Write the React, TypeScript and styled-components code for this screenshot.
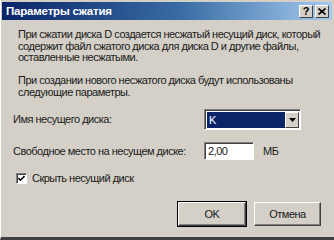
import React from "react";
import styled, { createGlobalStyle } from "styled-components";

const Global = createGlobalStyle`
  html, body { margin: 0; padding: 0; background: #d4d0c8; }
  body { width: 334px; height: 240px; overflow: hidden; }
`;

const Window = styled.div`
  width: 334px;
  height: 240px;
  box-sizing: border-box;
  background: #d4d0c8;
  border-left: 1px solid #ffffff;
  border-bottom: 3px solid #404040;
  padding: 2px 2px 0 1px;
  display: flex;
  flex-direction: column;
  font-family: "Liberation Sans", Arial, sans-serif;
  font-size: 11px;
  letter-spacing: -0.5px;
  color: #1a1a1a;
`;

const TitleBar = styled.div`
  height: 18px;
  display: flex;
  align-items: center;
  padding: 0 3px 0 4px;
  background: linear-gradient(to right, #0a246a 0%, #3a6ea5 55%, #a6caf0 100%);
`;

const Title = styled.span`
  flex: 1;
  color: #fff;
  font-weight: bold;
  font-size: 11.5px;
  letter-spacing: -0.2px;
`;

const TitleBtn = styled.div`
  width: 14px;
  height: 13px;
  margin-left: 2px;
  background: #d4d0c8;
  box-sizing: border-box;
  border-top: 1px solid #fff;
  border-left: 1px solid #fff;
  border-right: 1px solid #404040;
  border-bottom: 1px solid #404040;
  display: flex;
  align-items: center;
  justify-content: center;
  font-weight: bold;
  font-size: 11px;
  letter-spacing: 0;
  color: #000;
  line-height: 1;
`;

const Body = styled.div`
  flex: 1;
  display: flex;
  flex-direction: column;
  padding: 9px 10px 0 11px;
`;

const Para = styled.p<{ $mt?: number }>`
  margin: ${(p) => p.$mt ?? 0}px 0 0 5px;
  line-height: 11.7px;
  white-space: nowrap;
`;

const FormRow = styled.div<{ $mt: number; $h: number }>`
  display: grid;
  grid-template-columns: 191px max-content max-content;
  justify-content: start;
  align-items: center;
  margin-top: ${(p) => p.$mt}px;
  height: ${(p) => p.$h}px;
`;

const Label = styled.span``;

const Select = styled.div`
  width: 97px;
  height: 21px;
  box-sizing: border-box;
  background: #fff;
  border-top: 1px solid #808080;
  border-left: 1px solid #808080;
  border-right: 1px solid #fff;
  border-bottom: 1px solid #fff;
  box-shadow: inset 1px 1px 0 #404040;
  display: flex;
  padding: 2px 1px 1px 2px;
`;

const SelectValue = styled.div`
  flex: 1;
  background: #0a246a;
  color: #fff;
  padding-left: 2px;
  line-height: 16px;
`;

const ArrowBtn = styled.div`
  width: 14px;
  background: #d4d0c8;
  box-sizing: border-box;
  border-top: 1px solid #fff;
  border-left: 1px solid #fff;
  border-right: 1px solid #404040;
  border-bottom: 1px solid #404040;
  display: flex;
  align-items: center;
  justify-content: center;
`;

const Input = styled.div`
  width: 50px;
  height: 18px;
  box-sizing: border-box;
  background: #fff;
  border-top: 1px solid #808080;
  border-left: 1px solid #808080;
  border-right: 1px solid #fff;
  border-bottom: 1px solid #fff;
  box-shadow: inset 1px 1px 0 #404040;
  padding-left: 3px;
  line-height: 16px;
`;

const Unit = styled.span`
  margin-left: 9px;
`;

const CheckRow = styled.label`
  display: flex;
  align-items: center;
  margin-top: 12px;
  margin-left: 3px;
  height: 13px;
`;

const Box = styled.span`
  width: 11px;
  height: 11px;
  box-sizing: border-box;
  background: #fff;
  border-top: 1px solid #808080;
  border-left: 1px solid #808080;
  border-right: 1px solid #fff;
  border-bottom: 1px solid #fff;
  box-shadow: inset 1px 1px 0 #404040;
  display: flex;
  align-items: center;
  justify-content: center;
  margin-right: 5px;
`;

const Buttons = styled.div`
  display: flex;
  justify-content: flex-end;
  gap: 8px;
  margin-top: 17px;
  padding-right: 1px;
`;

const Button = styled.button<{ $default?: boolean; $w: number }>`
  width: ${(p) => p.$w}px;
  height: 24px;
  box-sizing: border-box;
  background: #d4d0c8;
  font-family: "Liberation Sans", Arial, sans-serif;
  font-size: 11px;
  letter-spacing: -0.5px;
  color: #1a1a1a;
  padding: 0;
  border-top: 1px solid #fff;
  border-left: 1px solid #fff;
  border-right: 1px solid #404040;
  border-bottom: 1px solid #404040;
  box-shadow: inset -1px -1px 0 #808080;
  outline: ${(p) => (p.$default ? "1px solid #000" : "none")};
  outline-offset: 0;
`;

export default function App() {
  return (
    <>
      <Global />
      <Window>
        <TitleBar>
          <Title>Параметры сжатия</Title>
          <TitleBtn>?</TitleBtn>
          <TitleBtn>
            <svg width="8" height="7" viewBox="0 0 8 7">
              <path d="M0.5 0.5 L7.5 6.5 M7.5 0.5 L0.5 6.5" stroke="#000" strokeWidth="1.6" />
            </svg>
          </TitleBtn>
        </TitleBar>
        <Body>
          <Para>
            При сжатии диска D создается несжатый несущий диск, который
            <br />
            содержит файл сжатого диска для диска D и другие файлы,
            <br />
            оставленные несжатыми.
          </Para>
          <Para $mt={11}>
            При создании нового несжатого диска будут использованы
            <br />
            следующие параметры.
          </Para>
          <FormRow $mt={10} $h={21}>
            <Label>Имя несущего диска:</Label>
            <Select>
              <SelectValue>K</SelectValue>
              <ArrowBtn>
                <svg width="7" height="4" viewBox="0 0 7 4">
                  <path d="M0 0 H7 L3.5 4 Z" fill="#000" />
                </svg>
              </ArrowBtn>
            </Select>
          </FormRow>
          <FormRow $mt={12} $h={18}>
            <Label>Свободное место на несущем диске:</Label>
            <Input>2,00</Input>
            <Unit>МБ</Unit>
          </FormRow>
          <CheckRow>
            <Box>
              <svg width="7" height="7" viewBox="0 0 7 7">
                <path d="M0.5 3 L2.5 5.2 L6.5 1" stroke="#000" strokeWidth="1.6" fill="none" />
              </svg>
            </Box>
            Скрыть несущий диск
          </CheckRow>
          <Buttons>
            <Button $default $w={68}>OK</Button>
            <Button $w={67}>Отмена</Button>
          </Buttons>
        </Body>
      </Window>
    </>
  );
}
